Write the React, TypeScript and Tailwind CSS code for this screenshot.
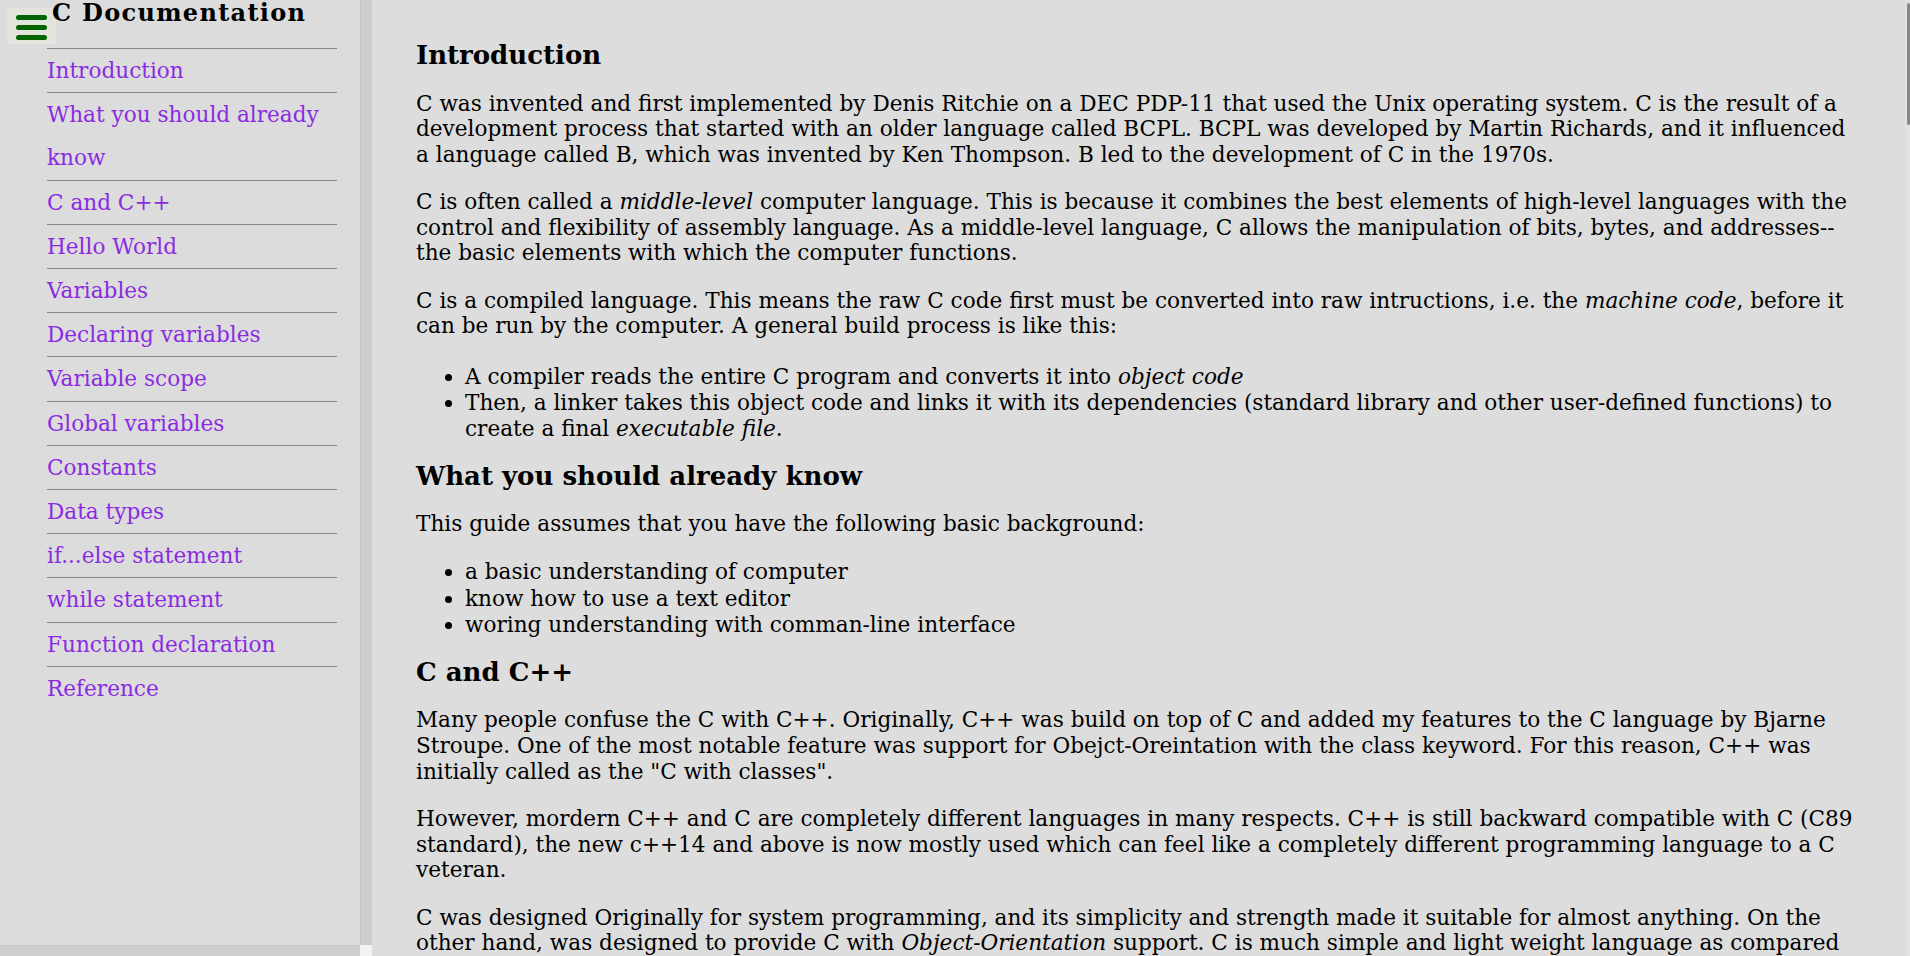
import React from "react";

const navItems = [
  "Introduction",
  "What you should already know",
  "C and C++",
  "Hello World",
  "Variables",
  "Declaring variables",
  "Variable scope",
  "Global variables",
  "Constants",
  "Data types",
  "if...else statement",
  "while statement",
  "Function declaration",
  "Reference",
];

export default function App() {
  return (
    <div className="flex h-[956px] w-[1910px] overflow-hidden bg-[#dddddd] font-['DejaVu_Serif','Liberation_Serif',serif] text-black">
      {/* Sidebar */}
      <aside className="flex w-[372px] shrink-0 flex-col">
        <div className="flex min-h-0 flex-1">
          <div className="relative w-[360px] bg-[#dcdcdc]">
            <button className="absolute left-[7px] top-[8px] flex h-[36px] w-[49px] flex-col gap-[5px] bg-[#e4e4df] pl-[9px] pt-[7px]">
              <span className="block h-[5px] w-[31px] rounded-full bg-[#006400]" />
              <span className="block h-[5px] w-[31px] rounded-full bg-[#006400]" />
              <span className="block h-[5px] w-[31px] rounded-full bg-[#006400]" />
            </button>
            <h1 className="relative z-10 pl-[52px] text-[24px] font-bold leading-[26px] tracking-[1.3px]">C Documentation</h1>
            <ul className="ml-[47px] mt-[22px] w-[290px]">
              {navItems.map((item) => (
                <li key={item} className="border-t border-[#888888] text-[21.6px] leading-[43.2px] text-[#8a2be2]">
                  <a href="#">{item}</a>
                </li>
              ))}
            </ul>
          </div>
          <div className="w-[12px] border-l border-[#c8c3bd] bg-[#cecece]" />
        </div>
        <div className="flex h-[11px]">
          <div className="w-[360px] border-t border-[#c6c6c6] bg-[#cfcfcf]" />
          <div className="w-[12px] bg-[#f4f3f1]" />
        </div>
      </aside>

      {/* Main */}
      <main className="relative flex-1 overflow-hidden">
        <div className="flex flex-col pl-[44px] pr-[50px] pt-[40px] text-[21.6px] leading-[25.6px]">
          <h2 className="text-[26px] font-bold leading-[30px]">Introduction</h2>
          <p className="mt-[20.6px]">
            C was invented and first implemented by Denis Ritchie on a DEC PDP-11 that used the Unix operating system. C is the result of a development process that started with an older language called BCPL. BCPL was developed by Martin Richards, and it influenced a language called B, which was invented by Ken Thompson. B led to the development of C in the 1970s.
          </p>
          <p className="mt-[21.7px]">
            C is often called a <i>middle-level</i> computer language. This is because it combines the best elements of high-level languages with the control and flexibility of assembly language. As a middle-level language, C allows the manipulation of bits, bytes, and addresses--the basic elements with which the computer functions.
          </p>
          <p className="mt-[21.7px]">
            C is a compiled language. This means the raw C code first must be converted into raw intructions, i.e. the <i>machine code</i>, before it can be run by the computer. A general build process is like this:
          </p>
          <ul className="mt-[25px] list-disc pl-[49px] leading-[26.2px]">
            <li>A compiler reads the entire C program and converts it into <i>object code</i></li>
            <li>
              Then, a linker takes this object code and links it with its dependencies (standard library and other user-defined functions) to create a final <i>executable file</i>.
            </li>
          </ul>
          <h2 className="mt-[19px] text-[26px] font-bold leading-[30px]">What you should already know</h2>
          <p className="mt-[19.8px]">This guide assumes that you have the following basic background:</p>
          <ul className="mt-[22.6px] list-disc pl-[49px] leading-[26.2px]">
            <li>a basic understanding of computer</li>
            <li>know how to use a text editor</li>
            <li>woring understanding with comman-line interface</li>
          </ul>
          <h2 className="mt-[19px] text-[26px] font-bold leading-[30px]">C and C++</h2>
          <p className="mt-[20.4px]">
            Many people confuse the C with C++. Originally, C++ was build on top of C and added my features to the C language by Bjarne Stroupe. One of the most notable feature was support for Obejct-Oreintation with the class keyword. For this reason, C++ was initially called as the "C with classes".
          </p>
          <p className="mt-[22px]">
            However, mordern C++ and C are completely different languages in many respects. C++ is still backward compatible with C (C89 standard), the new c++14 and above is now mostly used which can feel like a completely different programming language to a C veteran.
          </p>
          <p className="mt-[22px]">
            C was designed Originally for system programming, and its simplicity and strength made it suitable for almost anything. On the other hand, was designed to provide C with <i>Object-Orientation</i> support. C is much simple and light weight language as compared to C++, which is a much larger and more complex language.
          </p>
        </div>
        {/* overlay scrollbar */}
        <div className="absolute right-0 top-0 h-full w-[5px] bg-[#e2e2e2]">
          <div className="ml-[2px] mt-[3px] h-[122px] w-[3px] rounded-full bg-[#878987]" />
        </div>
      </main>
    </div>
  );
}
